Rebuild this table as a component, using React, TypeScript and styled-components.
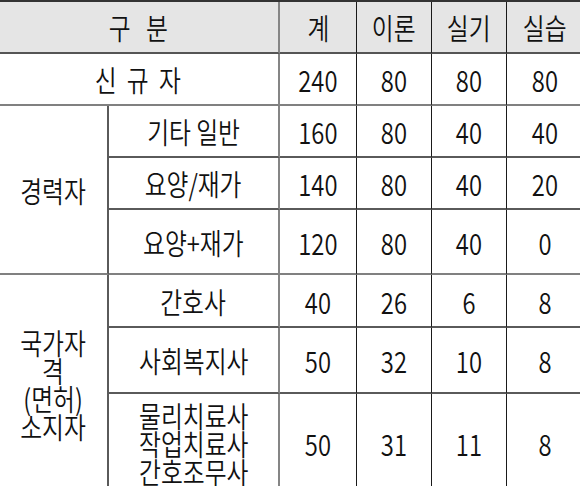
import styled, { createGlobalStyle } from "styled-components";

const Global = createGlobalStyle`
  html, body {
    margin: 0;
    padding: 0;
    background: #fff;
    overflow: hidden;
  }
  body {
    font-family: "Noto Sans CJK KR", "Noto Sans", sans-serif;
    color: #111;
  }
`;

const Table = styled.div`
  display: grid;
  width: 582px;
  grid-template-columns: 109px 171px 77px 75px 75px 75px;
  grid-template-rows: 52px 52px 52px 52px 65px 53px 66px 98px;
  border-top: 2px solid #333;
  box-sizing: border-box;
`;

type Line = "section" | "inner" | "head" | "none";
type Side = "thin" | "gray" | "dark" | "none";

const bottoms: Record<Line, string> = {
  section: "2px solid #808080",
  inner: "2px solid #5a5a5a",
  head: "2px solid #555",
  none: "none",
};

const rights: Record<Side, string> = {
  thin: "1px solid #1a1a1a",
  gray: "2px solid #858585",
  dark: "2px solid #5a5a5a",
  none: "none",
};

const Cell = styled.div<{
  $col: number;
  $row: number;
  $cs?: number;
  $rs?: number;
  $head?: boolean;
  $bottom: Line;
  $right: Side;
}>`
  grid-column: ${(p) => p.$col} / span ${(p) => p.$cs ?? 1};
  grid-row: ${(p) => p.$row} / span ${(p) => p.$rs ?? 1};
  display: flex;
  align-items: center;
  justify-content: center;
  text-align: center;
  box-sizing: border-box;
  background: ${(p) => (p.$head ? "#e5e5e5" : "#fff")};
  border-bottom: ${(p) => bottoms[p.$bottom]};
  border-right: ${(p) => rights[p.$right]};
  overflow: hidden;
`;

const Text = styled.span<{ $spread?: number }>`
  display: inline-block;
  font-size: 29px;
  font-weight: 350;
  line-height: 28px;
  white-space: nowrap;
  letter-spacing: ${(p) => p.$spread ?? 0}px;
  transform: scaleX(0.82);
`;

const numRight = (c: number): Side => (c === 6 ? "none" : "thin");

type NumRow = { row: number; vals: string[]; bottom: Line };

const numRows: NumRow[] = [
  { row: 1, vals: ["계", "이론", "실기", "실습"], bottom: "head" },
  { row: 2, vals: ["240", "80", "80", "80"], bottom: "section" },
  { row: 3, vals: ["160", "80", "40", "40"], bottom: "inner" },
  { row: 4, vals: ["140", "80", "40", "20"], bottom: "inner" },
  { row: 5, vals: ["120", "80", "40", "0"], bottom: "section" },
  { row: 6, vals: ["40", "26", "6", "8"], bottom: "inner" },
  { row: 7, vals: ["50", "32", "10", "8"], bottom: "inner" },
  { row: 8, vals: ["50", "31", "11", "8"], bottom: "none" },
];

const subRows: { row: number; label: React.ReactNode; bottom: Line }[] = [
  { row: 3, label: "기타 일반", bottom: "inner" },
  { row: 4, label: "요양/재가", bottom: "inner" },
  { row: 5, label: "요양+재가", bottom: "section" },
  { row: 6, label: "간호사", bottom: "inner" },
  { row: 7, label: "사회복지사", bottom: "inner" },
  {
    row: 8,
    label: (
      <>
        물리치료사
        <br />
        작업치료사
        <br />
        간호조무사
      </>
    ),
    bottom: "none",
  },
];

export default function App() {
  return (
    <>
      <Global />
      <Table>
        <Cell $col={1} $row={1} $cs={2} $head $bottom="head" $right="gray">
          <Text $spread={2}>구&nbsp;&nbsp;분</Text>
        </Cell>
        <Cell $col={1} $row={2} $cs={2} $bottom="section" $right="gray">
          <Text $spread={3}>신 규 자</Text>
        </Cell>
        <Cell $col={1} $row={3} $rs={3} $bottom="section" $right="dark">
          <Text>경력자</Text>
        </Cell>
        <Cell $col={1} $row={6} $rs={3} $bottom="none" $right="dark">
          <Text>
            국가자
            <br />
            격
            <br />
            (면허)
            <br />
            소지자
          </Text>
        </Cell>
        {subRows.map((r) => (
          <Cell key={r.row} $col={2} $row={r.row} $bottom={r.bottom} $right="gray">
            <Text>{r.label}</Text>
          </Cell>
        ))}
        {numRows.map((r) =>
          r.vals.map((v, i) => (
            <Cell
              key={`${r.row}-${i}`}
              $col={i + 3}
              $row={r.row}
              $head={r.row === 1}
              $bottom={r.bottom}
              $right={numRight(i + 3)}
            >
              <Text>{v}</Text>
            </Cell>
          ))
        )}
      </Table>
    </>
  );
}
